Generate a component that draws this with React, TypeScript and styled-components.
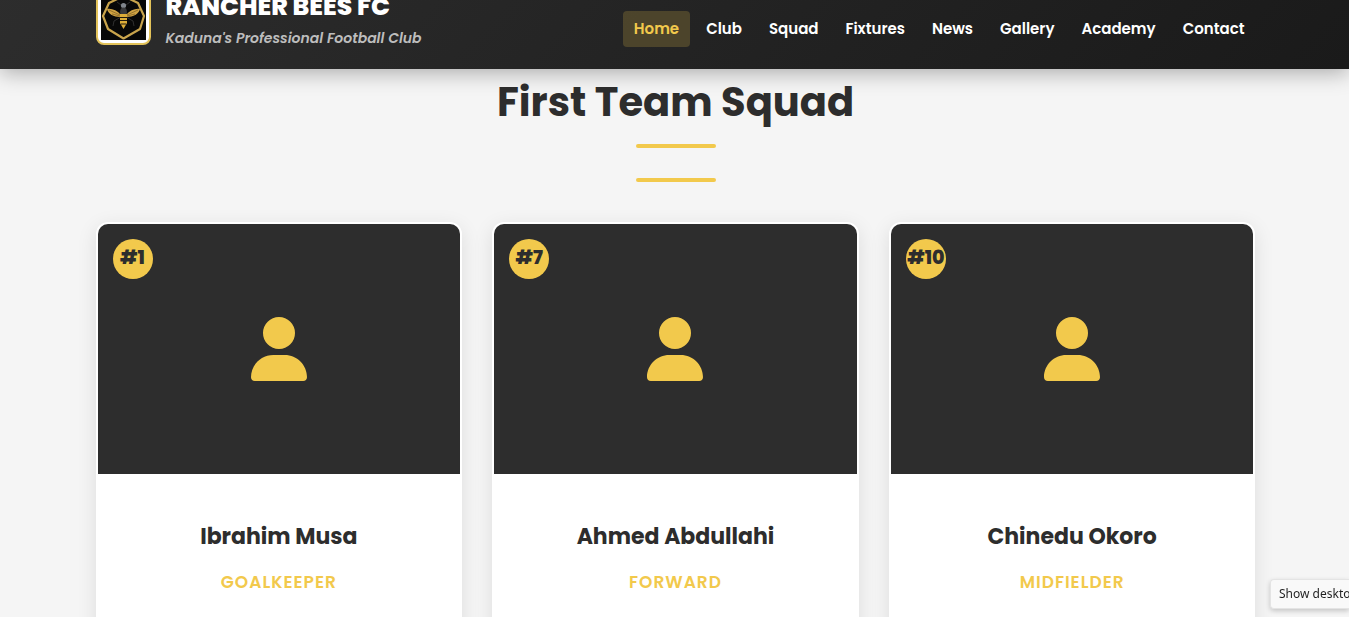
import React from "react";
import styled, { createGlobalStyle } from "styled-components";
import { FaUser } from "react-icons/fa6";

const GOLD = "#f2c94c";
const DARK = "#2d2d2d";

const GlobalStyle = createGlobalStyle`
  *, *::before, *::after { box-sizing: border-box; }
  body {
    margin: 0;
    background: #f5f5f5;
    color: ${DARK};
    font-family: Poppins, Inter, "Liberation Sans", sans-serif;
  }
  h1, h2, h3, p, ul { margin: 0; padding: 0; }
`;

const Page = styled.div`
  height: 100vh;
  overflow: hidden;
`;

const Header = styled.header`
  position: relative;
  z-index: 2;
  margin-top: -24px;
  padding: 14px 0 17px 2px;
  background: linear-gradient(135deg, ${DARK} 0%, #1a1a1a 100%);
  box-shadow: 0 4px 20px rgba(0, 0, 0, 0.3);
`;

const Container = styled.div`
  width: calc(100% - 40px);
  max-width: 1160px;
  margin: 0 auto;
`;

const HeaderRow = styled(Container)`
  display: flex;
  align-items: center;
  justify-content: space-between;
`;

const Brand = styled.a`
  display: flex;
  gap: 15px;
  color: #fff;
  text-decoration: none;
`;

const LogoFrame = styled.span`
  display: block;
  width: 55px;
  height: 55px;
  padding: 3px;
  border: 2px solid #e3c35a;
  border-radius: 8px;
  background: #fff;
  svg { display: block; }
`;

const BrandText = styled.span`
  display: flex;
  flex-direction: column;
`;

const ClubName = styled.span`
  font-size: 25px;
  font-weight: 800;
  line-height: 34px;
  white-space: nowrap;
`;

const Tagline = styled.span`
  color: #bdbdbd;
  font-size: 14px;
  font-style: italic;
  font-weight: 600;
  line-height: 28px;
  white-space: nowrap;
`;

const Nav = styled.nav`
  padding-top: 16px;
`;

const NavList = styled.ul`
  display: flex;
  gap: 5px;
  list-style: none;
`;

const NavLink = styled.a<{ $active?: boolean }>`
  display: block;
  padding: 8px 11px;
  border-radius: 4px;
  background: ${({ $active }) => ($active ? "rgba(242, 201, 76, 0.2)" : "transparent")};
  color: ${({ $active }) => ($active ? GOLD : "#fff")};
  font-size: 15px;
  font-weight: 600;
  line-height: 20px;
  text-decoration: none;
`;

const Squad = styled.main`
  padding: 8px 0 60px 2px;
`;

const SectionTitle = styled.h2`
  font-size: 40px;
  font-weight: 700;
  line-height: 50px;
  text-align: center;
`;

const Rules = styled.div`
  display: flex;
  flex-direction: column;
  align-items: center;
  gap: 30px;
  padding: 17px 0 40px;
`;

const Rule = styled.span`
  width: 80px;
  height: 4px;
  border-radius: 2px;
  background: ${GOLD};
`;

const Grid = styled.div`
  display: grid;
  grid-template-columns: repeat(auto-fit, minmax(280px, 1fr));
  gap: 30px;
`;

const Card = styled.article`
  position: relative;
  overflow: hidden;
  border: 2px solid #fff;
  border-radius: 12px;
  background: #fff;
  box-shadow: 0 5px 20px rgba(0, 0, 0, 0.1);
`;

const Portrait = styled.div`
  display: flex;
  align-items: center;
  justify-content: center;
  height: 250px;
  background: ${DARK};
  color: ${GOLD};
`;

const ShirtNumber = styled.span`
  position: absolute;
  top: 15px;
  left: 15px;
  display: flex;
  justify-content: center;
  width: 40px;
  height: 40px;
  border-radius: 50%;
  background: ${GOLD};
  color: ${DARK};
  font-size: 19px;
  font-weight: 800;
  line-height: 38px;
`;

const CardBody = styled.div`
  padding: 44px 24px 60px;
  text-align: center;
`;

const PlayerName = styled.h3`
  font-size: 22px;
  font-weight: 700;
  line-height: 38px;
`;

const Position = styled.p`
  margin-top: 12px;
  color: ${GOLD};
  font-size: 17px;
  font-weight: 600;
  letter-spacing: 1px;
  line-height: 28px;
  text-transform: uppercase;
`;

const Tooltip = styled.div`
  position: fixed;
  z-index: 3;
  right: 0;
  bottom: 8px;
  padding-left: 8px;
  width: 79px;
  border: 1px solid #e4e4e4;
  border-right: 0;
  border-radius: 4px 0 0 4px;
  background: #f9f9f9;
  box-shadow: 0 2px 5px rgba(0, 0, 0, 0.2);
  color: #1f1f1f;
  font-family: "Noto Sans", sans-serif;
  font-size: 12px;
  line-height: 28px;
  white-space: nowrap;
`;

const links = ["Home", "Club", "Squad", "Fixtures", "News", "Gallery", "Academy", "Contact"];

const players = [
  { number: 1, name: "Ibrahim Musa", position: "Goalkeeper" },
  { number: 7, name: "Ahmed Abdullahi", position: "Forward" },
  { number: 10, name: "Chinedu Okoro", position: "Midfielder" },
];

function BeeLogo() {
  return (
    <svg width="45" height="45" viewBox="0 0 45 45" aria-hidden="true">
      <rect width="45" height="45" fill="#080808" />
      <path
        d="M22.5 1 37 8 43 21 39 34 22.5 43.5 7 34 2 21 8 8Z"
        fill="none"
        stroke="#c9a44c"
        strokeWidth="2.200"
        strokeLinejoin="round"
      />
      <path d="M20 20C16 15 10 13 6 14c1 5 7 8 13 8ZM25 20c4-5 10-7 14-6-1 5-7 8-13 8Z" fill="#d0a343" />
      <path d="m8 15 11 5M11 19l8 2M37 15l-11 5M34 19l-8 2" stroke="#7d5d22" strokeWidth=".7" />
      <path d="m20 22-7 4-1 5M25 22l7 4 1 5M20 10l-4-3M25 10l4-3" fill="none" stroke="#333" strokeWidth=".9" />
      <circle cx="22.5" cy="10.500" r="2.600" fill="#80858c" />
      <ellipse cx="22.5" cy="17" rx="3.400" ry="4.500" fill="#39393a" />
      <path d="M19 19h7v9l-3.500 6-3.500-6Z" fill="#dcac38" />
      <path d="M19 22.500h7M19 25.500h7M20 29h5" stroke="#20190c" strokeWidth="1.200" />
    </svg>
  );
}

export default function App() {
  return (
    <Page>
      <GlobalStyle />
      <Header>
        <HeaderRow>
          <Brand href="#home">
            <LogoFrame>
              <BeeLogo />
            </LogoFrame>
            <BrandText>
              <ClubName>RANCHER BEES FC</ClubName>
              <Tagline>Kaduna's Professional Football Club</Tagline>
            </BrandText>
          </Brand>
          <Nav aria-label="Main">
            <NavList>
              {links.map((link, index) => (
                <li key={link}>
                  <NavLink href={`#${link.toLowerCase()}`} $active={index === 0}>
                    {link}
                  </NavLink>
                </li>
              ))}
            </NavList>
          </Nav>
        </HeaderRow>
      </Header>
      <Squad>
        <Container>
          <SectionTitle>First Team Squad</SectionTitle>
          <Rules>
            <Rule />
            <Rule />
          </Rules>
          <Grid>
            {players.map((player) => (
              <Card key={player.number}>
                <Portrait>
                  <FaUser size={64} />
                </Portrait>
                <ShirtNumber>#{player.number}</ShirtNumber>
                <CardBody>
                  <PlayerName>{player.name}</PlayerName>
                  <Position>{player.position}</Position>
                </CardBody>
              </Card>
            ))}
          </Grid>
        </Container>
      </Squad>
      <Tooltip role="tooltip">Show deskto</Tooltip>
    </Page>
  );
}
